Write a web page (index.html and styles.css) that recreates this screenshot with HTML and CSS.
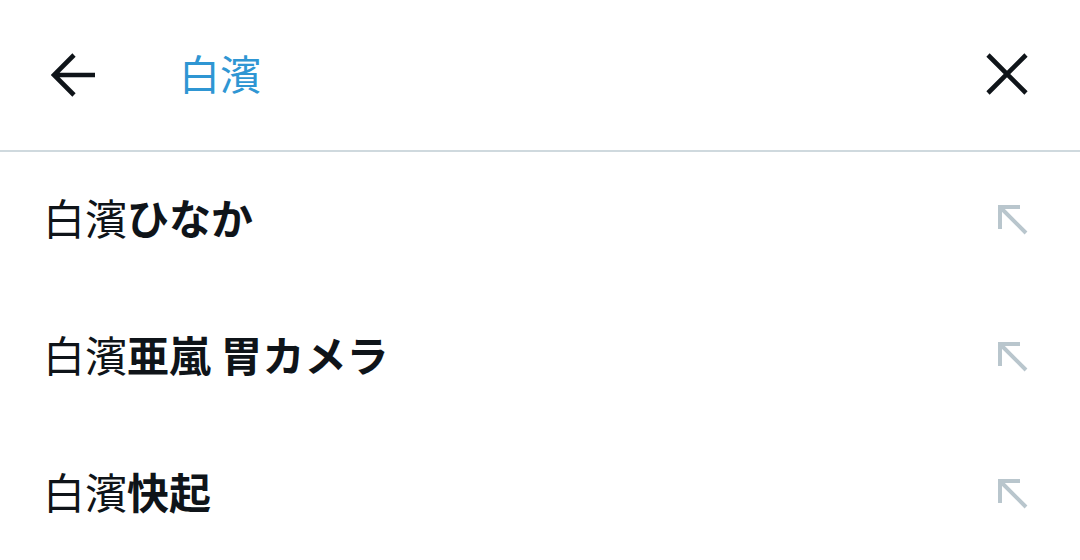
FILE: index.html
```html
<!DOCTYPE html>
<html lang="ja">
<head>
<meta charset="utf-8">
<link rel="stylesheet" href="styles.css">
</head>
<body>
<div class="page">
  <header class="search-bar">
    <svg class="back-icon" width="46" height="44" viewBox="0 0 46 44" aria-hidden="true">
      <path d="M23 2 L3 22 L23 42 M3 22 H44" fill="none" stroke="#0f1419" stroke-width="4.6"/>
    </svg>
    <div class="query">白濱</div>
    <svg class="close-icon" width="42" height="42" viewBox="0 0 42 42" aria-hidden="true">
      <path d="M2 2 L40 40 M40 2 L2 40" fill="none" stroke="#0f1419" stroke-width="4.6"/>
    </svg>
  </header>
  <ul class="suggestions">
    <li class="suggestion">
      <span class="text">白濱<b>ひなか</b></span>
      <svg class="fill-icon" width="34" height="34" viewBox="0 0 34 34" aria-hidden="true">
        <path d="M25 5 H5 V27 M5 5 L31 31" fill="none" stroke="#b9c6cd" stroke-width="4"/>
      </svg>
    </li>
    <li class="suggestion">
      <span class="text">白濱<b>亜嵐 胃カメラ</b></span>
      <svg class="fill-icon" width="34" height="34" viewBox="0 0 34 34" aria-hidden="true">
        <path d="M25 5 H5 V27 M5 5 L31 31" fill="none" stroke="#b9c6cd" stroke-width="4"/>
      </svg>
    </li>
    <li class="suggestion">
      <span class="text">白濱<b>快起</b></span>
      <svg class="fill-icon" width="34" height="34" viewBox="0 0 34 34" aria-hidden="true">
        <path d="M25 5 H5 V27 M5 5 L31 31" fill="none" stroke="#b9c6cd" stroke-width="4"/>
      </svg>
    </li>
  </ul>
</div>
</body>
</html>
```

FILE: styles.css
```css
html, body {
  margin: 0;
  padding: 0;
  background: #ffffff;
}

body {
  font-family: "Noto Sans CJK JP", "Noto Sans", sans-serif;
  color: #0f1419;
  width: 1080px;
  height: 560px;
  overflow: hidden;
}

.search-bar {
  height: 150px;
  border-bottom: 2px solid #cfd9de;
  display: flex;
  align-items: center;
  padding: 0 52px 0 51px;
}

.back-icon {
  flex: none;
}

.query {
  flex: 1;
  margin-left: 82px;
  margin-top: -6px;
  font-size: 41px;
  color: #2f96d3;
  line-height: 1;
}

.close-icon {
  flex: none;
  margin-top: -2px;
}

.suggestions {
  list-style: none;
  margin: 0;
  padding: 0;
}

.suggestion {
  height: 137px;
  display: flex;
  align-items: center;
  justify-content: space-between;
  padding: 0 51px 0 43px;
}

.text {
  font-size: 42px;
  line-height: 1;
  font-weight: 400;
  margin-top: -7px;
}

.text b {
  font-weight: 700;
}

.fill-icon {
  flex: none;
  margin-top: -4px;
}
```
